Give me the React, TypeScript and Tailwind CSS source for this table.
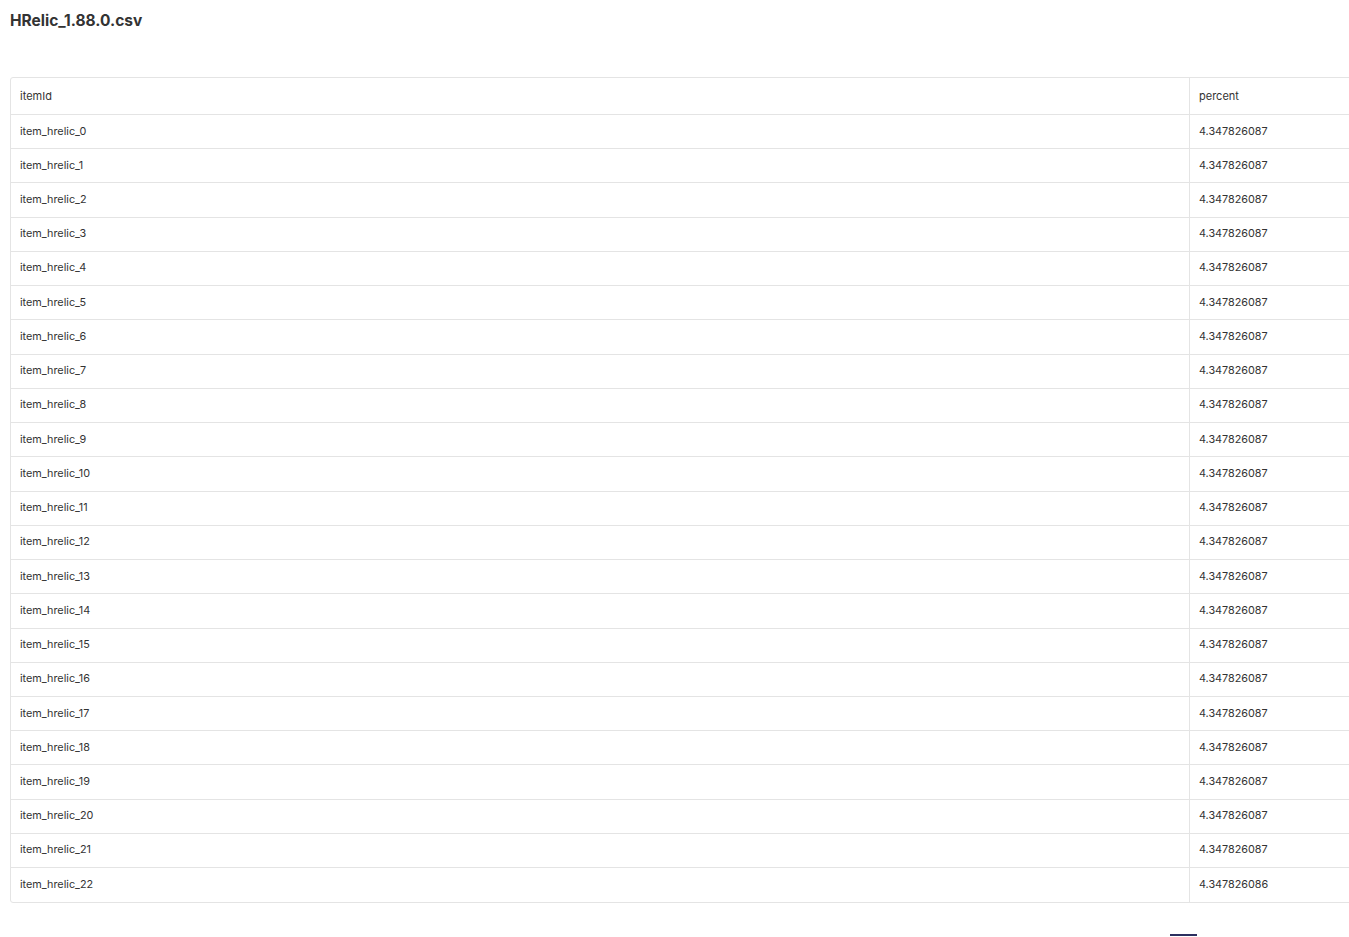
import React from "react";

const rows = Array.from({ length: 23 }, (_, i) => ({
  id: `item_hrelic_${i}`,
  pct: i === 22 ? "4.347826086" : "4.347826087",
}));

export default function App() {
  return (
    <div className="w-[1349px] h-[937px] overflow-hidden bg-white text-[#333] relative" style={{ fontFamily: "Inter, 'Liberation Sans', sans-serif" }}>
      <div className="pl-[10px] pt-[11px]">
        <h1 className="text-[15.5px] font-bold leading-[20px] text-[#333]">HRelic_1.88.0.csv</h1>
      </div>
      <div className="ml-[10px] mt-[46px] w-[1400px] border border-[#e4e4e4] rounded-[3px]">
        <div className="flex h-[37px] items-center border-b border-[#e4e4e4] text-[11px]">
          <div className="w-[1179px] pl-[9px] h-full flex items-center border-r border-[#e4e4e4]">itemId</div>
          <div className="pl-[9px] flex-1">percent</div>
        </div>
        {rows.map((r, i) => (
          <div key={r.id} className={`flex h-[34.24px] items-center text-[10.8px] ${i < rows.length - 1 ? "border-b border-[#e4e4e4]" : ""}`}>
            <div className="w-[1179px] pl-[9px] h-full flex items-center border-r border-[#e4e4e4]">{r.id}</div>
            <div className="pl-[9px] flex-1">{r.pct}</div>
          </div>
        ))}
      </div>
      <div className="absolute left-[1170px] top-[934px] w-[27px] h-[2px] bg-[#2b2f5f]" />
    </div>
  );
}
